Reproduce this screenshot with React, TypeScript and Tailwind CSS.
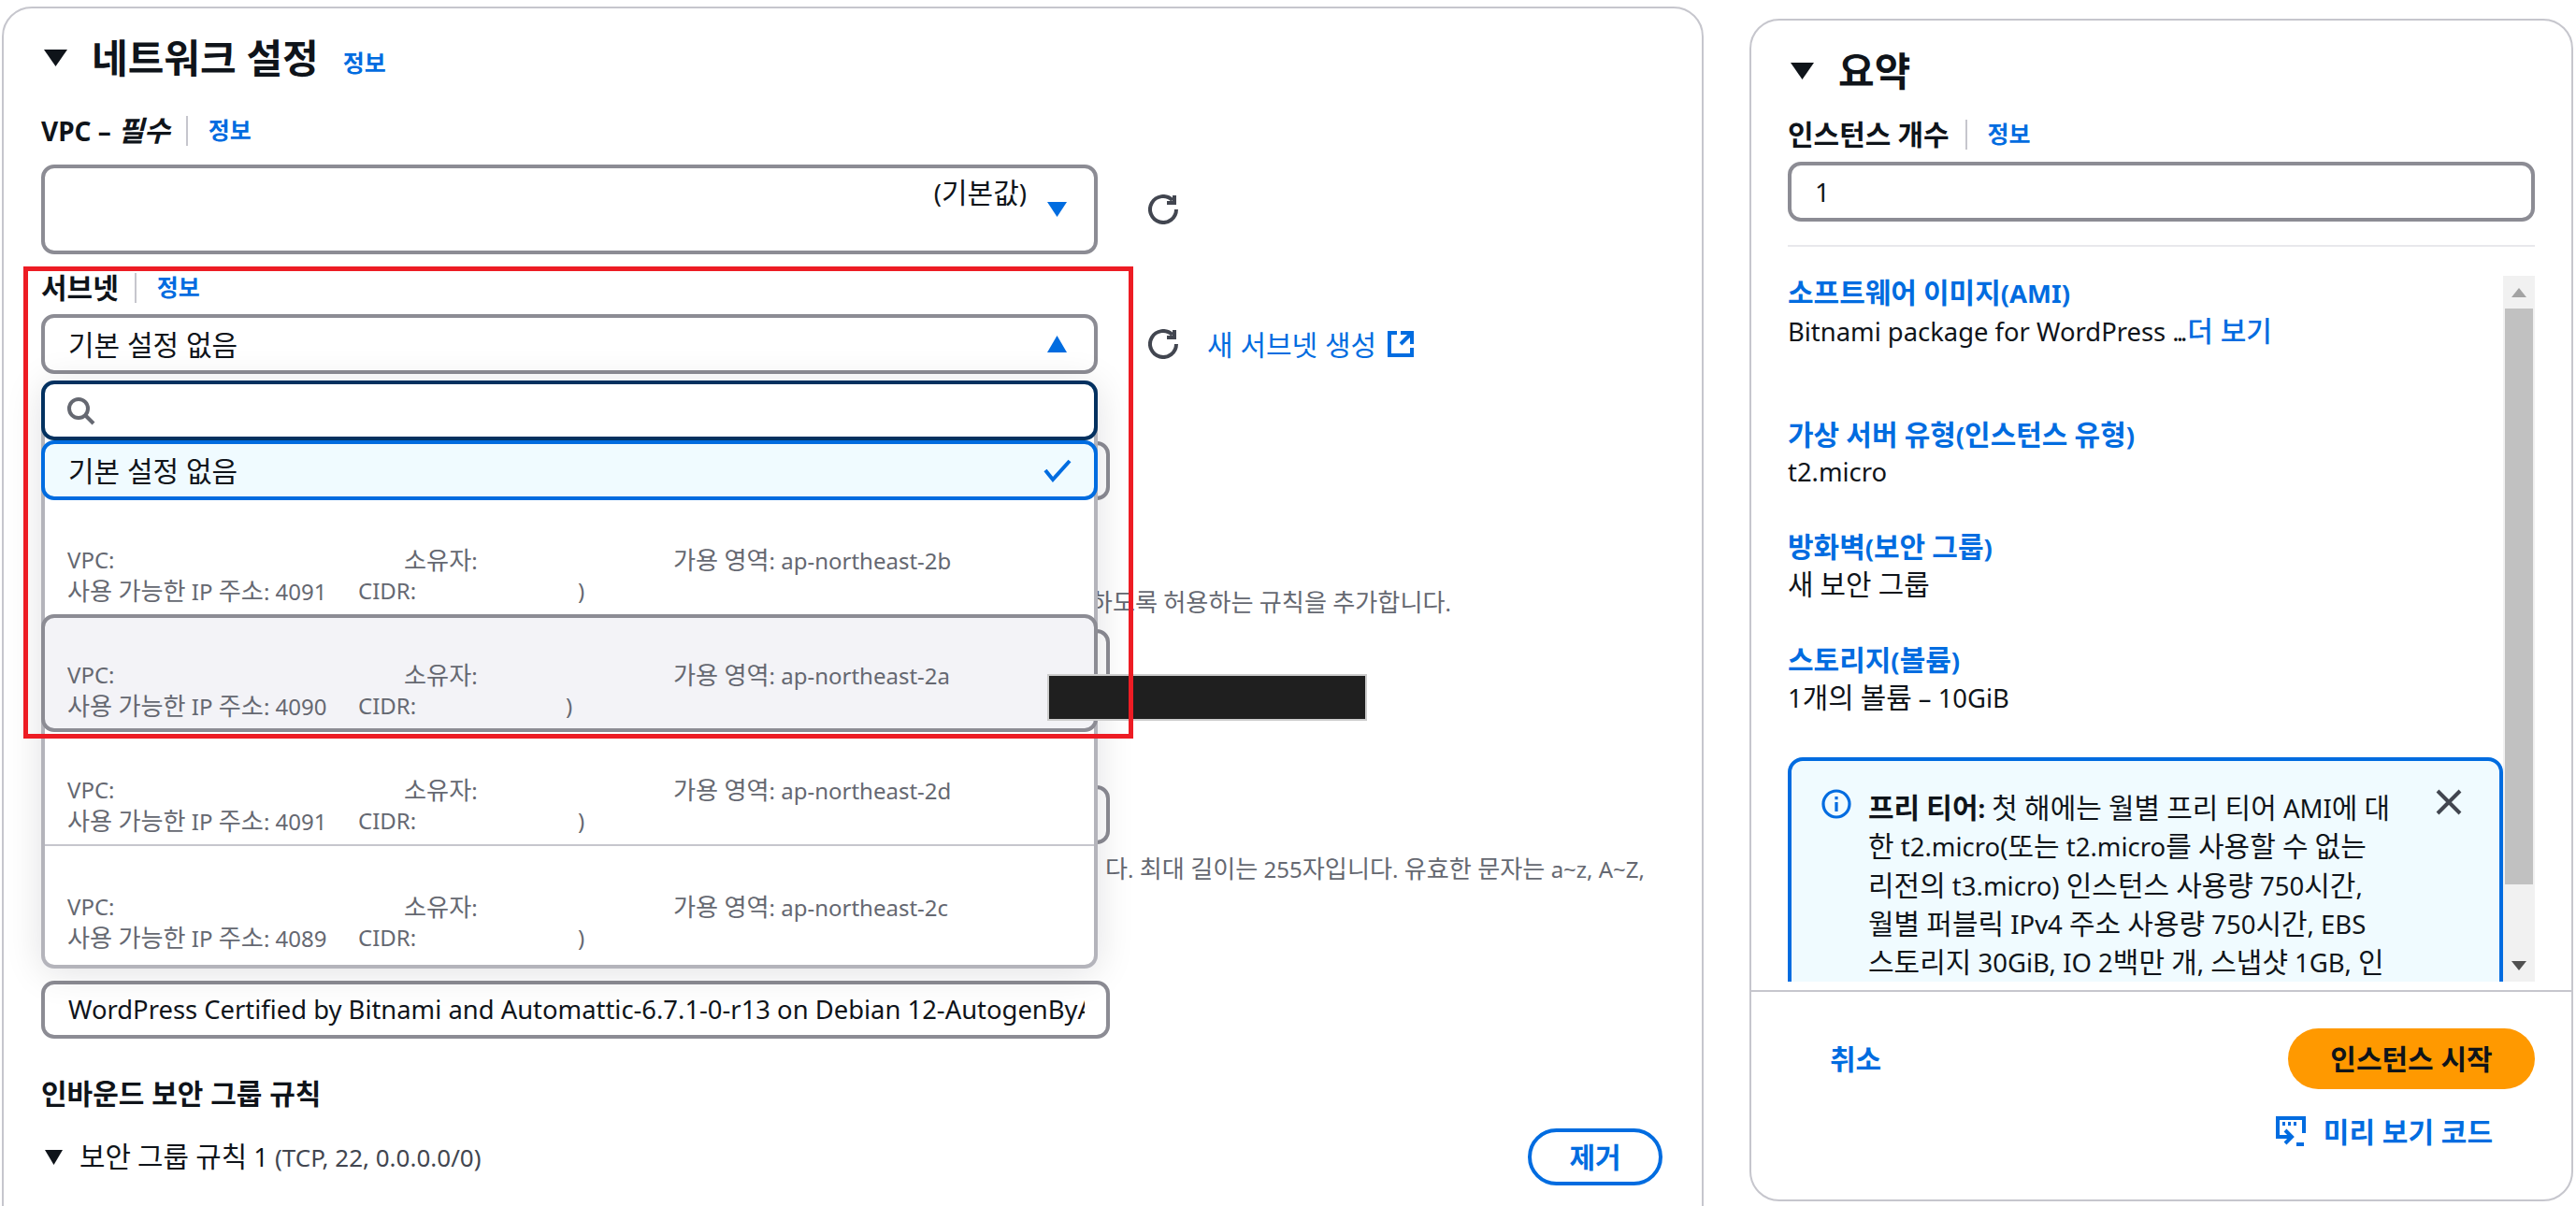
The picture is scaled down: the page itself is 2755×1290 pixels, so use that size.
import type { ReactNode } from "react";

const FONT = { fontFamily: '"Noto Sans", "Noto Sans CJK KR", sans-serif' };

const FREE_TIER_LINES = [
  "한 t2.micro(또는 t2.micro를 사용할 수 없는",
  "리전의 t3.micro) 인스턴스 사용량 750시간,",
  "월별 퍼블릭 IPv4 주소 사용량 750시간, EBS",
  "스토리지 30GiB, IO 2백만 개, 스냅샷 1GB, 인",
  "터넷 대역폭 100GB",
];

// hangul in the reference runs a bit larger than the latin next to it
function T({ children }: { children: string }) {
  const parts = children.split(/([가-힣]+)/);
  return (
    <span>
      {parts.map((part, i) =>
        i % 2 === 1 ? (
          <span key={i} className="text-[1.09em]">
            {part}
          </span>
        ) : (
          part
        ),
      )}
    </span>
  );
}

function Caret({ up, className }: { up?: boolean; className?: string }) {
  return (
    <svg viewBox="0 0 20 18" preserveAspectRatio="none" className={className} fill="currentColor">
      <path d={up ? "M10 0 L20 18 L0 18 Z" : "M0 0 L20 0 L10 18 Z"} />
    </svg>
  );
}

function RefreshIcon() {
  return (
    <svg viewBox="0 0 16 16" className="h-[32px] w-[32px] shrink-0 text-[#424650]" fill="none" stroke="currentColor" strokeWidth={2}>
      <path d="M15 8a7 7 0 1 1-2.05-4.95" />
      <path d="M14 .5v4h-4" />
    </svg>
  );
}

function ExternalIcon() {
  return (
    <svg viewBox="0 0 16 16" className="ml-[10px] h-[32px] w-[32px] text-[#006ce0]" fill="none" stroke="currentColor" strokeWidth={2}>
      <path d="M14 8V2H8" />
      <path d="M14 2 8 8" />
      <path d="M6 2H2v12h12v-4" />
    </svg>
  );
}

function Info({ className }: { className?: string }) {
  return <span className={`text-[25px] font-bold text-[#006ce0] ${className ?? ""}`}>정보</span>;
}

function FieldLabel({ children }: { children: ReactNode }) {
  return (
    <div className="flex h-[32px] items-center">
      <span className="text-[27.5px] font-bold text-[#0f141a]">{children}</span>
      <span className="ml-[17px] mr-[22px] h-[32px] w-[2px] bg-[#c6c6cd]" />
      <Info />
    </div>
  );
}

function Box({ className, children }: { className?: string; children?: ReactNode }) {
  return (
    <div className={`rounded-[14px] border-[4px] border-[#8c8c94] bg-white ${className ?? ""}`}>{children}</div>
  );
}

type OptionProps = { zone: string; ips: string; hover?: boolean; sep?: boolean; last?: boolean };

function SubnetOption({ zone, ips, hover, sep, last }: OptionProps) {
  let shell = "h-[122px] pb-[8px] pl-[24px]";
  if (hover) shell = "-mx-[4px] h-[126px] rounded-[14px] border-[4px] border-[#8c8c94] bg-[#f3f3f7] pb-[7px] pl-[24px]";
  if (sep) shell = "h-[122px] border-b-[2px] border-[#c6c6cd] pb-[8px] pl-[24px]";
  if (last) shell = "h-[127px] pb-[12px] pl-[24px]";
  return (
    <div className={`flex flex-col justify-end whitespace-nowrap text-[24px] leading-[32px] text-[#656871] ${shell}`}>
      <div className="flex">
        <span className="w-[360px]">VPC:</span>
        <span className="w-[288px]">
          <T>소유자:</T>
        </span>
        <span>
          <T>{`가용 영역: ${zone}`}</T>
        </span>
      </div>
      <div className="flex">
        <span className="w-[311px]">
          <T>{`사용 가능한 IP 주소: ${ips}`}</T>
        </span>
        <span className={hover ? "w-[222px]" : "w-[235px]"}>CIDR:</span>
        <span>)</span>
      </div>
    </div>
  );
}

function SubnetDropdown() {
  return (
    <div className="absolute left-0 top-[71px] z-10 w-[1130px] rounded-[14px] border-x-[4px] border-b-[4px] border-[#b4b4bb] bg-white shadow-[0_4px_40px_rgba(0,7,22,0.12)]">
      <div className="-mx-[4px] flex h-[64px] items-center rounded-[14px] border-[4px] border-[#033160] bg-white pl-[22px]">
        <svg viewBox="0 0 16 16" className="h-[32px] w-[32px] text-[#656871]" fill="none" stroke="currentColor" strokeWidth={2}>
          <circle cx="7" cy="7" r="5" />
          <path d="m11 11 4 4" />
        </svg>
      </div>
      <div className="-mx-[4px] flex h-[64px] items-center justify-between rounded-[14px] border-[4px] border-[#006ce0] bg-[#f0fbff] pl-[25px] pr-[22px] text-[30px] text-[#0f141a]">
        <span>기본 설정 없음</span>
        <svg viewBox="0 0 16 16" className="h-[32px] w-[32px] text-[#006ce0]" fill="none" stroke="currentColor" strokeWidth={2}>
          <path d="m1 8 4 5 9-10" />
        </svg>
      </div>
      <SubnetOption zone="ap-northeast-2b" ips="4091" />
      <SubnetOption zone="ap-northeast-2a" ips="4090" hover />
      <SubnetOption zone="ap-northeast-2d" ips="4091" sep />
      <SubnetOption zone="ap-northeast-2c" ips="4089" last />
    </div>
  );
}

function NetworkPanel() {
  return (
    <div className="relative ml-[2px] mt-[7px] h-[1400px] w-[1820px] shrink-0 overflow-hidden rounded-[32px] border-2 border-[#c6c6cd] pl-[40px] pt-[28px] text-[#0f141a]">
      <div className="flex h-[50px] items-center">
        <Caret className="ml-[3px] h-[18px] w-[25px] text-[#0f141a]" />
        <span className="ml-[26px] text-[42px] font-bold leading-none">네트워크 설정</span>
        <Info className="ml-[26px] mt-[12px]" />
      </div>
      <div className="mt-[37px]">
        <FieldLabel>
          <span className="text-[28px]">
            VPC – <i className="text-[1.08em]">필수</i>
          </span>
        </FieldLabel>
      </div>
      <div className="mt-[20px] flex items-center">
        <Box className="flex h-[96px] w-[1130px] justify-between pl-[24px] pr-[29px]">
          <span className="ml-auto mr-[22px] mt-[4px] text-[27.5px]">
            <T>(기본값)</T>
          </span>
          <Caret className="mt-[36px] h-[16px] w-[21px] text-[#006ce0]" />
        </Box>
        <div className="ml-[54px]">
          <RefreshIcon />
        </div>
      </div>

      <div className="mt-[20px]">
        <FieldLabel>
          <T>서브넷</T>
        </FieldLabel>
      </div>
      <div className="relative mt-[12px] flex items-center">
        <Box className="flex h-[64px] w-[1130px] items-center justify-between pl-[25px] pr-[29px]">
          <span className="text-[30px]">기본 설정 없음</span>
          <Caret up className="h-[18px] w-[21px] text-[#006ce0]" />
        </Box>
        <div className="ml-[54px]">
          <RefreshIcon />
        </div>
        <span className="ml-[31px] text-[30px] text-[#006ce0]">새 서브넷 생성</span>
        <ExternalIcon />
        <SubnetDropdown />
      </div>

      <Box className="mt-[72px] h-[63px] w-[1143px]" />
      <div className="ml-[1134px] mt-[95px] flex h-[30px] w-[374px] items-center justify-end whitespace-nowrap text-[24px] text-[#656871]">
        <T>하도록 허용하는 규칙을 추가합니다.</T>
      </div>
      <Box className="mt-[13px] h-[64px] w-[1143px]" />
      <Box className="mt-[103px] h-[63px] w-[1143px]" />
      <div className="ml-[1134px] mt-[12px] flex h-[30px] w-[581px] items-center justify-end whitespace-nowrap text-[24px] text-[#656871]">
        <T>다. 최대 길이는 255자입니다. 유효한 문자는 a~z, A~Z,</T>
      </div>
      <Box className="mt-[104px] flex h-[62px] w-[1143px] items-center overflow-hidden pl-[25px] pr-[23px]">
        <span className="overflow-hidden whitespace-nowrap text-[27.4px]">
          WordPress Certified by Bitnami and Automattic-6.7.1-0-r13 on Debian 12-AutogenByAWSMP--1
        </span>
      </Box>
      <div className="mt-[39px] flex h-[38px] items-center text-[30px] font-bold">인바운드 보안 그룹 규칙</div>
      <div className="mt-[19px] flex h-[61px] w-[1734px] items-center justify-between">
        <div className="flex items-center">
          <Caret className="ml-[4px] h-[16px] w-[19px]" />
          <span className="ml-[18px] text-[27.4px] text-[#0f141a]">
            <T>보안 그룹 규칙 1 </T>
            <span className="text-[26px] text-[#424650]">(TCP, 22, 0.0.0.0/0)</span>
          </span>
        </div>
        <div className="flex h-[61px] w-[144px] items-center justify-center rounded-full border-[4px] border-[#006ce0] text-[30px] font-bold text-[#006ce0]">
          제거
        </div>
      </div>
    </div>
  );
}

function SummaryItem({ title, className, children }: { title: string; className?: string; children: ReactNode }) {
  return (
    <div className={className}>
      <div className="flex h-[36px] items-center text-[27.5px] font-bold text-[#006ce0]">
        <T>{title}</T>
      </div>
      <div className="mt-[2px] flex h-[40px] items-center text-[27.4px] text-[#0f141a]">
        <span>{children}</span>
      </div>
    </div>
  );
}

function SummaryPanel() {
  return (
    <div className="ml-[49px] mt-[20px] flex h-[1265px] w-[881px] shrink-0 flex-col overflow-hidden rounded-[32px] border-2 border-[#c6c6cd] text-[#0f141a]">
      <div className="px-[39px] pt-[34px]">
        <div className="flex h-[40px] items-center">
          <Caret className="ml-[3px] h-[18px] w-[25px]" />
          <span className="ml-[26px] text-[42px] font-bold leading-none">요약</span>
        </div>
        <div className="mt-[32px]">
          <FieldLabel>
            <T>인스턴스 개수</T>
          </FieldLabel>
        </div>
        <Box className="mt-[13px] flex h-[64px] items-center pl-[25px] text-[28px]">1</Box>
        <div className="mt-[25px] h-[2px] bg-[#e8e8ec]" />
        <div className="mt-[31px] flex h-[755px]">
          <div className="min-w-0 flex-1 overflow-hidden">
            <SummaryItem title="소프트웨어 이미지(AMI)">
              Bitnami package for WordPress <span className="tracking-[-3px]">...</span>
              <span className="ml-[3px] text-[30px] font-medium text-[#006ce0]">더 보기</span>
            </SummaryItem>
            <SummaryItem title="가상 서버 유형(인스턴스 유형)" className="mt-[74px]">
              t2.micro
            </SummaryItem>
            <SummaryItem title="방화벽(보안 그룹)" className="mt-[42px]">
              <T>새 보안 그룹</T>
            </SummaryItem>
            <SummaryItem title="스토리지(볼륨)" className="mt-[43px]">
              <T>1개의 볼륨 – 10GiB</T>
            </SummaryItem>
            <div className="mt-[44px] flex h-[320px] rounded-[16px] border-[4px] border-[#006ce0] bg-[#f0fbff] pl-[32px] pr-[38px] pt-[30px]">
              <svg viewBox="0 0 16 16" className="h-[32px] w-[32px] shrink-0 text-[#006ce0]" fill="none" stroke="currentColor" strokeWidth={1.6}>
                <circle cx="8" cy="8" r="7" />
                <path d="M8 7v5M8 4v1.6" />
              </svg>
              <div className="ml-[18px] whitespace-nowrap text-[27.5px] leading-[40.3px]">
                <div>
                  <b>
                    <T>프리 티어:</T>
                  </b>{" "}
                  <T>첫 해에는 월별 프리 티어 AMI에 대</T>
                </div>
                {FREE_TIER_LINES.map((line) => (
                  <div key={line}>
                    <T>{line}</T>
                  </div>
                ))}
              </div>
              <svg viewBox="0 0 16 16" className="ml-auto mt-[-2px] h-[32px] w-[32px] shrink-0 text-[#424650]" fill="none" stroke="currentColor" strokeWidth={2}>
                <path d="m2 2 12 12M14 2 2 14" />
              </svg>
            </div>
          </div>
          <div className="flex w-[34px] shrink-0 flex-col bg-[#f1f1f1]">
            <div className="flex h-[35px] items-center justify-center text-[#a3a3a3]">
              <Caret up className="h-[10px] w-[16px]" />
            </div>
            <div className="mx-[2px] h-[616px] bg-[#c1c1c1]" />
            <div className="mt-auto flex h-[35px] items-center justify-center text-[#505050]">
              <Caret className="h-[10px] w-[16px]" />
            </div>
          </div>
        </div>
      </div>
      <div className="mt-[9px] border-t-2 border-[#c6c6cd] px-[39px] pt-[39px]">
        <div className="flex items-center justify-between">
          <span className="ml-[45px] text-[30px] font-bold text-[#006ce0]">취소</span>
          <div className="flex h-[65px] w-[264px] items-center justify-center rounded-full bg-[#ff9900] text-[30px] font-bold text-[#0f141a]">
            인스턴스 시작
          </div>
        </div>
        <div className="mt-[29px] flex h-[32px] items-center justify-end pr-[45px] text-[30px] font-bold text-[#006ce0]">
          <svg viewBox="0 0 16 16" className="mr-[19px] h-[32px] w-[32px]" fill="none" stroke="currentColor" strokeWidth={2}>
            <path d="M8 11H1V1h14v8" />
            <path d="m5 7.5 3.5 3.5L5 14.5" />
            <path d="M11 15h4" />
            <path d="M3.5 4H5M6.5 4H8M9.5 4H11" />
          </svg>
          미리 보기 코드
        </div>
      </div>
    </div>
  );
}

export default function App() {
  return (
    <div className="relative flex h-[1290px] w-[2755px] items-start overflow-hidden bg-white" style={FONT}>
      <NetworkPanel />
      <SummaryPanel />
      {/* annotation marks drawn on the screenshot */}
      <div className="pointer-events-none absolute left-[25px] top-[285px] z-20 h-[505px] w-[1187px] border-[5px] border-[#ed1c24]" />
      <div className="absolute left-[1120px] top-[721px] z-10 h-[50px] w-[342px] border-2 border-[#cccccc] bg-[#1f1f1f]" />
    </div>
  );
}
